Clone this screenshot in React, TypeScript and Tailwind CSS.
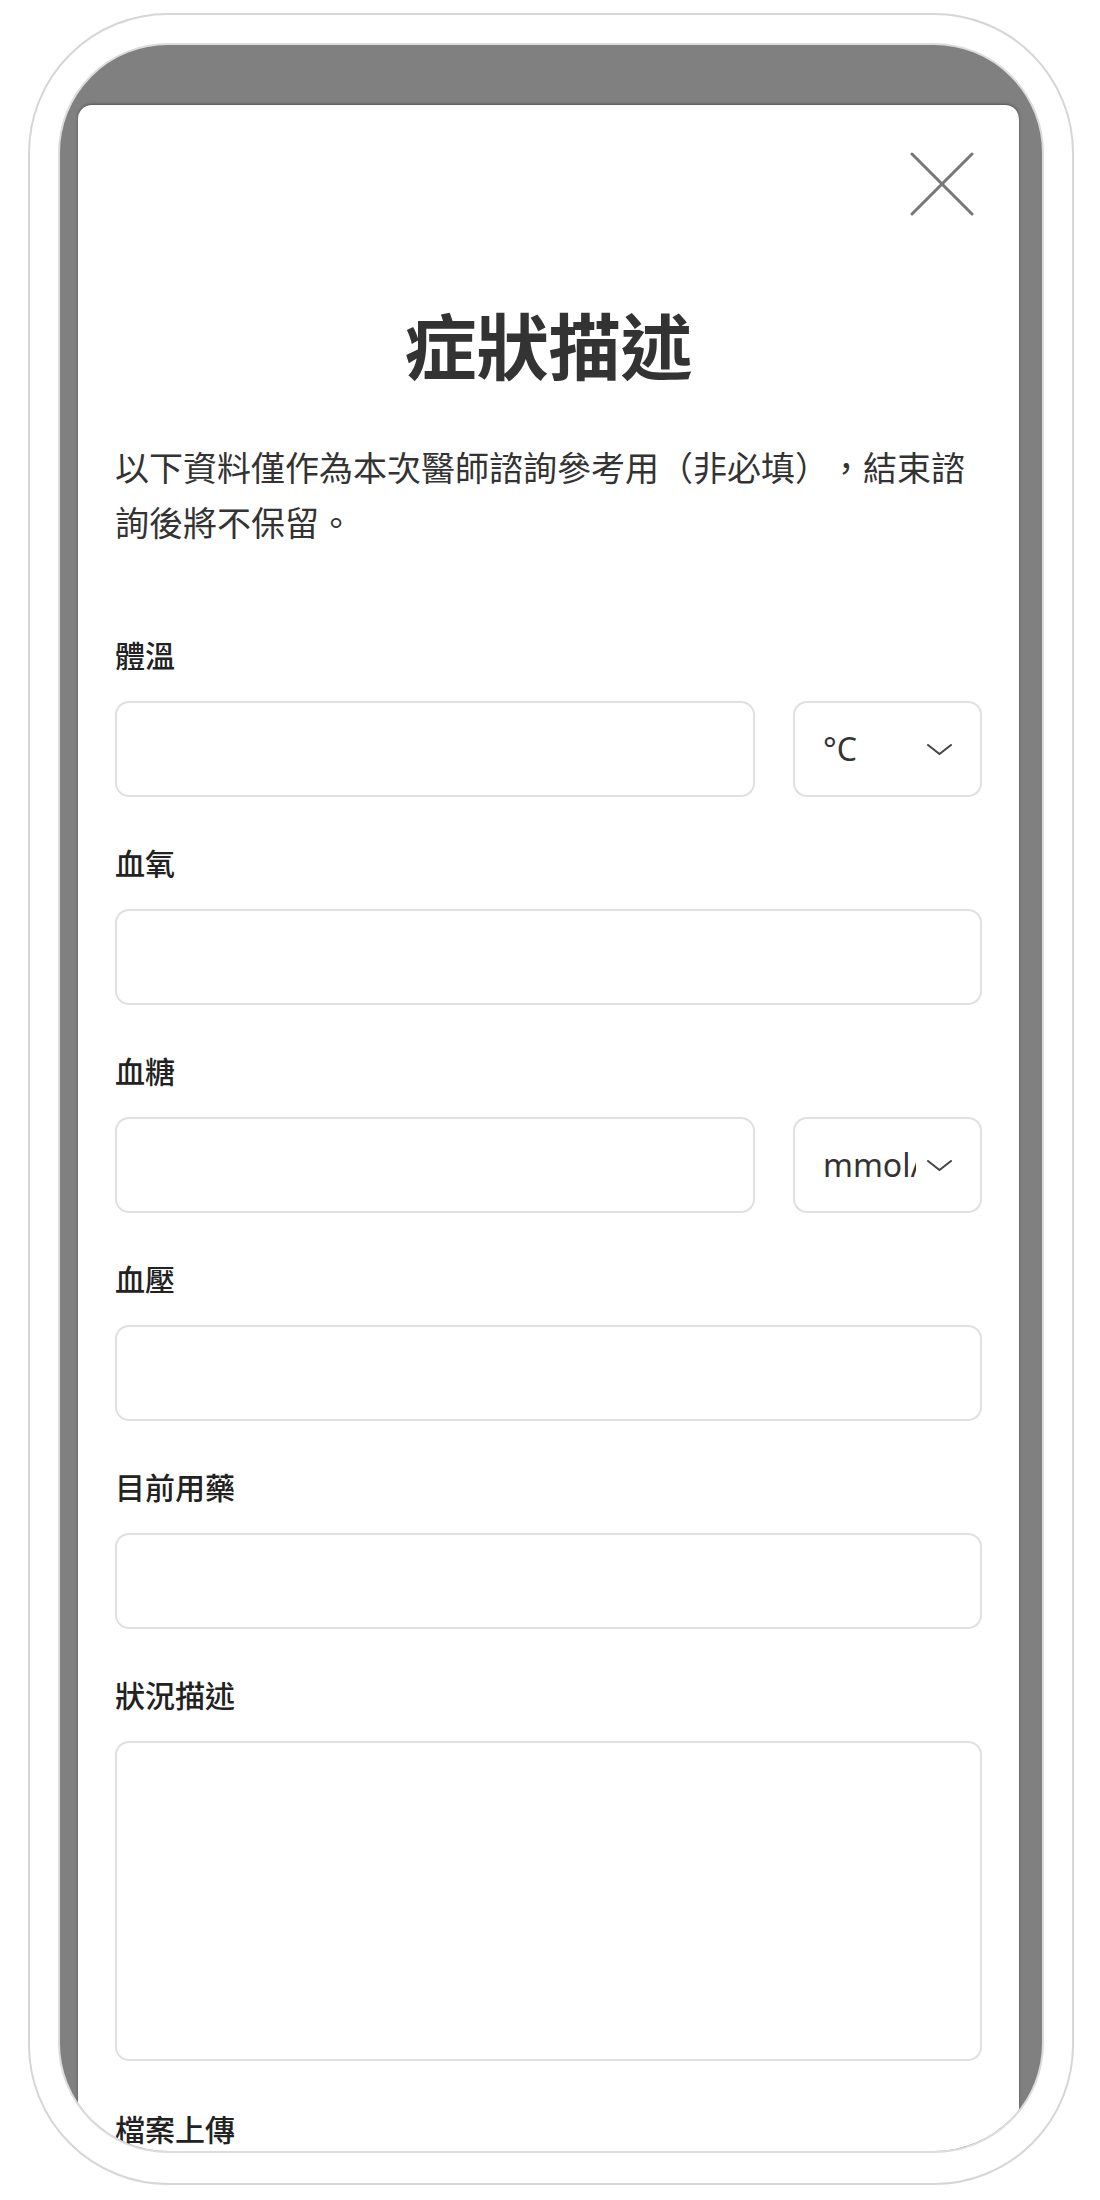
const cjk = { fontFamily: '"Noto Sans CJK TC", "Noto Sans", sans-serif' };
const latin = { fontFamily: '"Noto Sans", "Noto Sans CJK TC", sans-serif' };

function Chevron() {
  return (
    <svg width="25" height="11" viewBox="0 0 25 11" className="shrink-0">
      <polyline points="1,1 12.5,10 24,1" fill="none" stroke="#444" strokeWidth="2" strokeLinecap="round" strokeLinejoin="round" />
    </svg>
  );
}

function Label({ children, className = '' }: { children: React.ReactNode; className?: string }) {
  return (
    <div className={`text-[30px] leading-[40px] font-medium text-[#222] ${className}`} style={cjk}>
      {children}
    </div>
  );
}

function TextBox({ className = '' }: { className?: string }) {
  return <input type="text" className={`block h-[96px] rounded-[14px] border-2 border-[#e0e0e0] bg-white outline-none ${className}`} />;
}

function UnitSelect({ value }: { value: string }) {
  return (
    <div className="flex h-[96px] w-[189px] shrink-0 items-center rounded-[14px] border-2 border-[#e0e0e0] bg-white pl-[28px] pr-[28px]">
      <div className="w-[93px] overflow-hidden whitespace-nowrap text-[32px] leading-[40px] text-[#333]" style={latin}>
        {value}
      </div>
      <div className="ml-auto">
        <Chevron />
      </div>
    </div>
  );
}

export default function App() {
  return (
    <div className="h-[2200px] w-[1100px] bg-white pl-[28px] pt-[13px]">
      {/* phone frame */}
      <div className="h-[2172px] w-[1046px] rounded-[140px] border-2 border-[#d6d6d6] bg-white px-[28px] pb-[30px] pt-[28px]">
        {/* screen with dimmed backdrop */}
        <div className="h-full overflow-hidden rounded-[110px] border-2 border-[#dcdcdc] bg-[#808080] pl-[18px] pt-[60px]">
          {/* sheet */}
          <div className="h-[2100px] w-[941px] rounded-t-[14px] bg-white px-[37px] shadow-[0_-1px_3px_rgba(0,0,0,0.35)]">
            <div className="flex justify-end pr-[8px] pt-[47px]">
              <svg width="64" height="64" viewBox="0 0 64 64">
                <line x1="2" y1="2" x2="62" y2="62" stroke="#777" strokeWidth="3" strokeLinecap="round" />
                <line x1="62" y1="2" x2="2" y2="62" stroke="#777" strokeWidth="3" strokeLinecap="round" />
              </svg>
            </div>

            <h1 className="mt-[91px] text-center text-[72px] font-bold leading-[72px] text-[#333]" style={cjk}>
              症狀描述
            </h1>

            <p className="mt-[60px] text-[34px] leading-[55px] text-[#333] [text-spacing-trim:space-all]" style={cjk}>
              以下資料僅作為本次醫師諮詢參考用（非必填），結束諮詢後將不保留。
            </p>

            <Label className="mt-[85px]">體溫</Label>
            <div className="mt-[27px] flex gap-[38px]">
              <TextBox className="min-w-0 flex-1" />
              <UnitSelect value="°C" />
            </div>

            <Label className="mt-[45px]">血氧</Label>
            <TextBox className="mt-[27px] w-full" />

            <Label className="mt-[45px]">血糖</Label>
            <div className="mt-[27px] flex gap-[38px]">
              <TextBox className="min-w-0 flex-1" />
              <UnitSelect value="mmol/L" />
            </div>

            <Label className="mt-[45px]">血壓</Label>
            <TextBox className="mt-[27px] w-full" />

            <Label className="mt-[45px]">目前用藥</Label>
            <TextBox className="mt-[27px] w-full" />

            <Label className="mt-[45px]">狀況描述</Label>
            <textarea className="mt-[27px] block h-[320px] w-full resize-none rounded-[14px] border-2 border-[#e0e0e0] bg-white outline-none" />

            <Label className="mt-[47px]">檔案上傳</Label>
          </div>
        </div>
      </div>
    </div>
  );
}
